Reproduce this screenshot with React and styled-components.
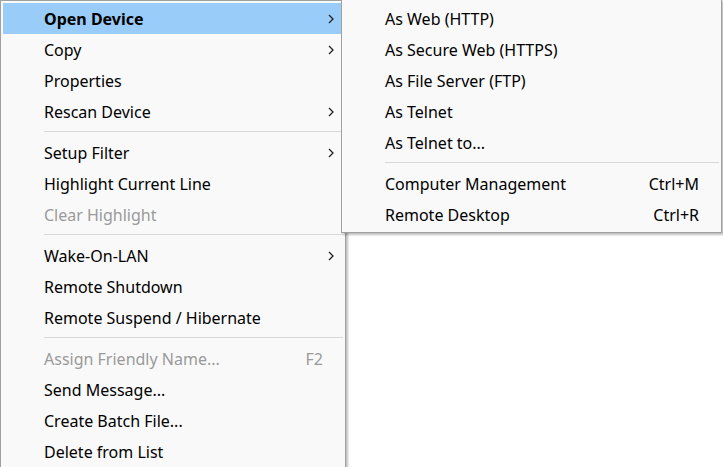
import React from "react";
import styled, { createGlobalStyle } from "styled-components";

const Global = createGlobalStyle`
  html, body { margin: 0; background: #fff; overflow: hidden; }
  body { font-family: "Noto Sans", "Open Sans", sans-serif; font-size: 16px; color: #000; }
`;

const Stage = styled.div`
  position: relative;
  width: 723px;
  height: 467px;
`;

const Menu = styled.div`
  width: 340px;
  background: #f9f9f9;
  border: 1px solid #a0a0a0;
  box-shadow: 2px 2px 2px rgba(0, 0, 0, 0.25);
  padding: 2px 2px 20px;
  display: flex;
  flex-direction: column;
`;

const SubMenu = styled(Menu)`
  position: absolute;
  left: 341px;
  top: -1px;
  width: 375px;
  padding: 3px 2px 2px;
`;

const Row = styled.div`
  height: 31px;
  display: flex;
  align-items: center;
  padding: 0 0 0 41px;
  background: ${(p) => (p.$active ? "#99ccf9" : "transparent")};
  color: ${(p) => (p.$disabled ? "#9a9a9a" : "#000")};
  font-weight: ${(p) => (p.$bold ? 700 : 400)};
  white-space: nowrap;
`;

const Label = styled.span`
  flex: 1;
`;

const Shortcut = styled.span`
  margin-right: ${(p) => p.$mr}px;
  color: inherit;
`;

const Arrow = styled.svg`
  width: 8px;
  height: 12px;
  margin-right: 8px;
`;

const Sep = styled.div`
  height: 1px;
  background: #d8d8d8;
  margin: 4px 0 5px 41px;
`;

const Chevron = () => (
  <Arrow viewBox="0 0 8 12">
    <path d="M2 2 L6 6 L2 10" fill="none" stroke="#222" strokeWidth="1.3" />
  </Arrow>
);

const main = [
  { t: "Open Device", sub: true, active: true, bold: true },
  { t: "Copy", sub: true },
  { t: "Properties" },
  { t: "Rescan Device", sub: true },
  "-",
  { t: "Setup Filter", sub: true },
  { t: "Highlight Current Line" },
  { t: "Clear Highlight", disabled: true },
  "-",
  { t: "Wake-On-LAN", sub: true },
  { t: "Remote Shutdown" },
  { t: "Remote Suspend / Hibernate" },
  "-",
  { t: "Assign Friendly Name...", disabled: true, key: "F2" },
  { t: "Send Message..." },
  { t: "Create Batch File..." },
  { t: "Delete from List" },
];

const sub = [
  { t: "As Web (HTTP)" },
  { t: "As Secure Web (HTTPS)" },
  { t: "As File Server (FTP)" },
  { t: "As Telnet" },
  { t: "As Telnet to..." },
  "-",
  { t: "Computer Management", key: "Ctrl+M" },
  { t: "Remote Desktop", key: "Ctrl+R" },
];

const renderItems = (items, mr) =>
  items.map((it, i) =>
    it === "-" ? (
      <Sep key={i} />
    ) : (
      <Row key={i} $active={it.active} $bold={it.bold} $disabled={it.disabled}>
        <Label>{it.t}</Label>
        {it.key && <Shortcut $mr={mr}>{it.key}</Shortcut>}
        {it.sub && <Chevron />}
      </Row>
    )
  );

export default function App() {
  return (
    <Stage>
      <Global />
      <Menu>{renderItems(main, 20)}</Menu>
      <SubMenu>{renderItems(sub, 20)}</SubMenu>
    </Stage>
  );
}
